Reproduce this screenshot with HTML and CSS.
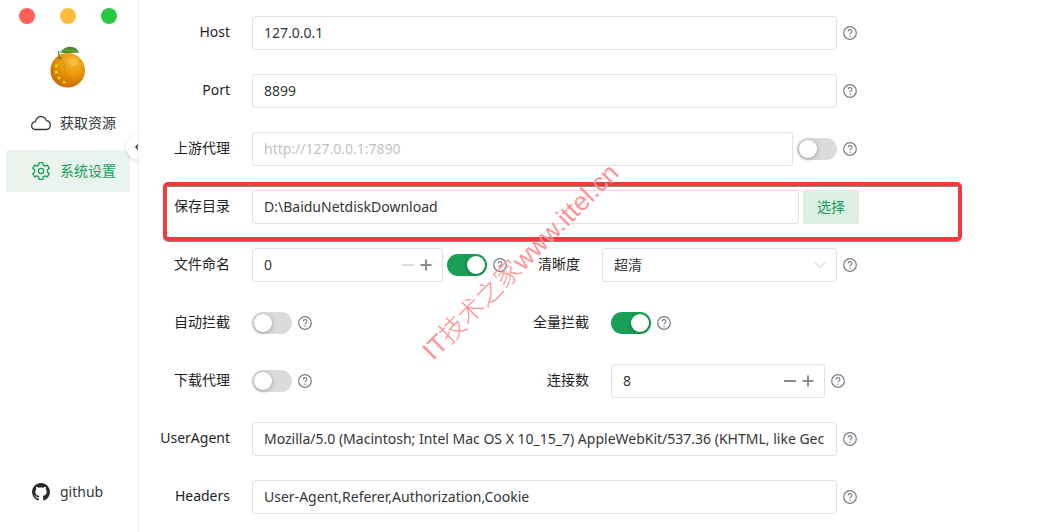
FILE: index.html
```html
<!DOCTYPE html>
<html lang="zh-CN">
<head>
  <meta charset="utf-8">
  <title>系统设置</title>
  <link rel="stylesheet" href="styles.css">
</head>
<body>
  <svg class="defs" width="0" height="0" aria-hidden="true">
    <symbol id="help" viewBox="0 0 14 14">
      <circle cx="7" cy="7" r="6.3" fill="none" stroke="currentColor" stroke-width="1.2"/>
      <path d="M5.1 5.5C5.1 4.3 6 3.6 7 3.6S8.9 4.3 8.9 5.4C8.9 6.8 7 6.9 7 8.4" fill="none" stroke="currentColor" stroke-width="1.1"/>
      <circle cx="7" cy="10.2" r=".75" fill="currentColor"/>
    </symbol>
    <symbol id="minus" viewBox="0 0 12 12">
      <path d="M0 6H12" stroke="currentColor" stroke-width="2"/>
    </symbol>
    <symbol id="plus" viewBox="0 0 12 12">
      <path d="M.5 6H11.5M6 .5V11.5" stroke="currentColor" stroke-width="2"/>
    </symbol>
  </svg>

  <div class="app">
    <aside class="sidebar">
      <div class="window-dots">
        <span class="dot red"></span>
        <span class="dot yellow"></span>
        <span class="dot green"></span>
      </div>
      <svg class="logo" viewBox="0 0 36 42" aria-hidden="true">
        <defs>
          <radialGradient id="peel" cx=".65" cy=".25" r=".8">
            <stop offset="0" stop-color="#f5b62f"/>
            <stop offset=".45" stop-color="#e99c0c"/>
            <stop offset="1" stop-color="#c96305"/>
          </radialGradient>
        </defs>
        <circle cx="17.7" cy="24.3" r="17.3" fill="url(#peel)"/>
        <path d="M10 12C17 18 13 34 25 39" fill="none" stroke="#cf7106" stroke-width="1" opacity=".5"/>
        <ellipse cx="23" cy="16" rx="5" ry="3.5" fill="#f7c65b" opacity=".6"/>
        <path d="M10 13C9 10 8.500 8 8.500 5" fill="none" stroke="#4f8a2c" stroke-width="1.300"/>
        <path d="M10 6.500C13 2 18 0 22 1C26 1.500 28 4 29 7C22 6 17 8 10 6.500Z" fill="#4b8a2b"/>
        <path d="M11 6C17 3 22 4 28 6.500" fill="none" stroke="#8db965" stroke-width=".7"/>
        <path d="M8 12.500L10 12L12 12.500" fill="none" stroke="#76702a" stroke-width="1.300"/>
        <path d="M4.500 18.500L8.500 19L6 22ZM4.500 25.500L6.500 24.500L8.500 27L5 28ZM6.500 31.500L10.500 30.500L10 34ZM12.500 37.500L13.500 34.500L16.500 37Z" fill="#dce900"/>
      </svg>

      <nav class="menu">
        <a class="menu-item" href="#">
          <svg class="menu-icon" viewBox="0 0 20 20" fill="none" stroke="currentColor" stroke-width="1.300" stroke-linejoin="round">
            <path d="M5 16.500C2.400 16.500.7 14.900.7 12.700S2.300 9 4.500 8.700C5 5.600 7.300 3.600 10 3.600C12.600 3.600 14.600 5 15.500 7.700C17.900 8 19.300 9.700 19.300 12C19.300 14.700 17.600 16.500 15 16.500Z"/>
          </svg>
          获取资源
        </a>
        <a class="menu-item active" href="#">
          <svg class="menu-icon" viewBox="0 0 20 20" fill="none" stroke="currentColor" stroke-width="1.300" stroke-linejoin="round">
            <path d="M8.200 1.600H11.800L12.300 4.100L14 5.100L16.400 4.200L18.300 7.300L16.400 9V11L18.300 12.700L16.400 15.800L14 14.900L12.300 15.900L11.800 18.400H8.200L7.700 15.900L6 14.900L3.600 15.800L1.700 12.700L3.600 11V9L1.700 7.300L3.600 4.200L6 5.100L7.700 4.100Z"/>
            <circle cx="10" cy="10" r="2.600"/>
          </svg>
          系统设置
        </a>
      </nav>

      <a class="menu-item github" href="#">
        <svg class="menu-icon" viewBox="-1 -1 18 18" fill="currentColor">
          <path d="M8 0C3.580 0 0 3.580 0 8c0 3.540 2.290 6.530 5.470 7.590.4.070.55-.17.55-.38 0-.19-.01-.82-.01-1.490-2.010.37-2.530-.49-2.690-.94-.09-.23-.48-.94-.82-1.130-.28-.15-.68-.52-.01-.53.63-.01 1.080.58 1.230.82.72 1.210 1.870.87 2.330.66.07-.52.28-.87.51-1.070-1.780-.2-3.640-.89-3.640-3.950 0-.87.31-1.590.82-2.150-.08-.2-.36-1.020.08-2.120 0 0 .67-.21 2.200.82.64-.18 1.320-.27 2-.27s1.360.09 2 .27c1.530-1.040 2.200-.82 2.200-.82.44 1.100.16 1.920.08 2.120.51.56.82 1.270.82 2.150 0 3.070-1.870 3.750-3.650 3.950.29.25.54.73.54 1.480 0 1.070-.01 1.930-.01 2.200 0 .21.15.46.55.38A8.010 8.010 0 0 0 16 8c0-4.420-3.580-8-8-8Z"/>
        </svg>
        github
      </a>

      <div class="collapse-clip">
        <button class="collapse" type="button" aria-label="收起菜单">
          <svg viewBox="0 0 12 12" fill="none" stroke="currentColor" stroke-width="1.500"><path d="M7.500 2.500L4 6L7.500 9.500"/></svg>
        </button>
      </div>
    </aside>

    <main class="content">
      <form class="settings">
        <div class="row">
          <label class="label" for="host">Host</label>
          <div class="field">
            <input class="input" id="host" type="text" value="127.0.0.1">
            <svg class="help"><use href="#help"/></svg>
          </div>
        </div>

        <div class="row">
          <label class="label" for="port">Port</label>
          <div class="field">
            <input class="input" id="port" type="text" value="8899">
            <svg class="help"><use href="#help"/></svg>
          </div>
        </div>

        <div class="row">
          <label class="label" for="upstream">上游代理</label>
          <div class="field">
            <div class="group">
              <input class="input" id="upstream" type="text" placeholder="http://127.0.0.1:7890">
              <input class="switch" type="checkbox" role="switch" aria-label="启用上游代理">
            </div>
            <svg class="help"><use href="#help"/></svg>
          </div>
        </div>

        <div class="row highlighted">
          <label class="label" for="dir">保存目录</label>
          <div class="group">
            <input class="input" id="dir" type="text" value="D:\BaiduNetdiskDownload">
            <button class="choose" type="button">选择</button>
          </div>
        </div>

        <div class="row split narrow">
          <label class="label" for="naming">文件命名</label>
          <div class="field">
            <div class="group">
              <div class="number">
                <input class="number-input" id="naming" type="number" value="0" min="0">
                <button class="step" type="button" aria-label="减少" disabled><svg><use href="#minus"/></svg></button>
                <button class="step" type="button" aria-label="增加"><svg><use href="#plus"/></svg></button>
              </div>
              <input class="switch" type="checkbox" role="switch" aria-label="启用文件命名" checked>
            </div>
            <svg class="help"><use href="#help"/></svg>
          </div>
          <label class="label" for="quality">清晰度</label>
          <div class="field">
            <div class="select-box">
              <select class="input select" id="quality">
                <option>超清</option>
              </select>
              <svg class="arrow" viewBox="0 0 12 12" fill="none" stroke="currentColor"><path d="M1 3.500L6 8.500L11 3.500"/></svg>
            </div>
            <svg class="help"><use href="#help"/></svg>
          </div>
        </div>

        <div class="row split">
          <label class="label" for="auto">自动拦截</label>
          <div class="field">
            <input class="switch" id="auto" type="checkbox" role="switch">
            <svg class="help"><use href="#help"/></svg>
          </div>
          <label class="label" for="full">全量拦截</label>
          <div class="field">
            <input class="switch" id="full" type="checkbox" role="switch" checked>
            <svg class="help"><use href="#help"/></svg>
          </div>
        </div>

        <div class="row split">
          <label class="label" for="download">下载代理</label>
          <div class="field">
            <input class="switch" id="download" type="checkbox" role="switch">
            <svg class="help"><use href="#help"/></svg>
          </div>
          <label class="label" for="connections">连接数</label>
          <div class="field inset">
            <div class="number">
              <input class="number-input" id="connections" type="number" value="8" min="1">
              <button class="step" type="button" aria-label="减少"><svg><use href="#minus"/></svg></button>
              <button class="step" type="button" aria-label="增加"><svg><use href="#plus"/></svg></button>
            </div>
            <svg class="help"><use href="#help"/></svg>
          </div>
        </div>

        <div class="row">
          <label class="label" for="agent">UserAgent</label>
          <div class="field">
            <input class="input" id="agent" type="text" value="Mozilla/5.0 (Macintosh; Intel Mac OS X 10_15_7) AppleWebKit/537.36 (KHTML, like Gecko)">
            <svg class="help"><use href="#help"/></svg>
          </div>
        </div>

        <div class="row">
          <label class="label" for="headers">Headers</label>
          <div class="field">
            <input class="input" id="headers" type="text" value="User-Agent,Referer,Authorization,Cookie">
            <svg class="help"><use href="#help"/></svg>
          </div>
        </div>
      </form>
      <div class="watermark">IT技术之家www.ittel.cn</div>
    </main>
  </div>
</body>
</html>
```
FILE: styles.css
```css
* { box-sizing: border-box; }
body { margin: 0; background: #fff; color: #1f2225; font-family: "Noto Sans", "Noto Sans CJK SC", sans-serif; font-size: 14px; line-height: 22px; }
button, input, select { margin: 0; font: inherit; color: #333639; }
.defs { position: absolute; }
.app { display: flex; min-height: 100vh; }

/* sidebar */
.sidebar { position: relative; display: flex; flex-direction: column; flex: none; width: 139px; padding: 8px 8px 19px 6px; border-right: 1px solid #efeff5; }
.window-dots { display: flex; gap: 25px; padding-left: 13px; }
.dot { width: 16px; height: 16px; border-radius: 50%; }
.red { background: #ff5f57; }
.yellow { background: #ffbd3b; }
.green { background: #28c840; }
.logo { width: 36px; height: 42px; margin: 22px 0 0 44px; }
.menu { display: flex; flex-direction: column; gap: 6px; margin-top: 14px; }
.menu-item { display: flex; align-items: center; gap: 9px; height: 42px; padding-left: 25px; border-radius: 3px; color: #333639; text-decoration: none; }
.menu-item.active { background: linear-gradient(90deg, #ebf2ec, #e7f4ef); color: #18a058; }
.menu-icon { width: 20px; height: 20px; }
.github { margin-top: auto; }
.github .menu-icon { color: #24292e; }
.collapse-clip { position: absolute; top: 131px; right: 0; width: 16px; height: 32px; overflow: hidden; }
.collapse { display: flex; align-items: center; justify-content: center; width: 24px; height: 24px; margin: 4px; padding: 0; border: 0; border-radius: 50%; background: #fff; box-shadow: 0 1px 4px rgba(0, 0, 40, .15); }
.collapse svg { flex: none; width: 12px; height: 12px; }

/* settings form */
.content { position: relative; flex: 1; min-width: 0; padding: 16px 184px 18px 0; overflow: hidden; }
.settings { display: flex; flex-direction: column; gap: 24px; }
.row { display: grid; grid-template-columns: 113px 1fr; align-items: center; min-height: 34px; padding-right: 2px; }
.row > * { min-width: 0; }
.label { padding: 0 22px 2px 0; text-align: right; white-space: nowrap; }
.split { grid-template-columns: 113px 1fr 113px 1fr; }
.split.narrow { grid-template-columns: 113px 1fr 95px 1fr; }
.field { display: flex; align-items: center; gap: 6px; }
.inset { padding-right: 12px; }
.group { display: flex; flex: 1; align-items: center; gap: 4px; min-width: 0; }
.input, .number { flex: 1; width: 100%; min-width: 0; height: 34px; border: 1px solid #e0e0e6; border-radius: 3px; background: #fff; outline: none; }
.input { padding: 0 11px 2px; }
.input::placeholder { color: #c2c2c2; }
.help { flex: none; width: 14px; height: 14px; color: #767c88; }
.number { display: flex; align-items: center; gap: 6px; padding: 0 10px 0 11px; }
.number-input { flex: 1; min-width: 0; padding: 0; border: 0; outline: none; appearance: textfield; }
.number-input::-webkit-inner-spin-button { appearance: none; }
.step { display: flex; padding: 0; border: 0; background: none; color: #8c8c8c; }
.step:disabled { color: #dbdbdb; }
.step svg { width: 12px; height: 12px; }
.select-box { position: relative; display: flex; flex: 1; }
.select { padding-bottom: 0; appearance: none; }
.arrow { position: absolute; top: 11px; right: 11px; width: 12px; height: 12px; color: #c2c2c2; pointer-events: none; }
.switch { display: flex; flex: none; align-items: center; width: 40px; height: 22px; padding: 2px; border-radius: 11px; background: #dbdbdb; appearance: none; }
.switch::before { content: ""; width: 18px; height: 18px; border-radius: 50%; background: #fff; box-shadow: 0 1px 4px rgba(0, 0, 0, .3); }
.switch:checked { justify-content: flex-end; background: #18a058; }
.choose { flex: none; width: 56px; height: 34px; padding: 0; border: 0; border-radius: 3px; background: #dbefe3; color: #18a058; }

/* annotations over the form */
.highlighted { position: relative; padding-right: 0; }
.highlighted::after { content: ""; position: absolute; top: -8px; right: -103px; bottom: -17px; left: 24px; border: 4px solid #f23a3a; border-radius: 5px; box-shadow: 0 1px 0 #888, inset 0 1px 0 #888; pointer-events: none; }
.watermark { position: absolute; top: 333px; left: 300px; color: #ff9292; font-family: "Liberation Sans", "Noto Sans CJK SC", sans-serif; font-size: 26px; font-weight: 300; line-height: 34px; white-space: nowrap; transform: rotate(-45deg); transform-origin: left bottom; pointer-events: none; }
```
